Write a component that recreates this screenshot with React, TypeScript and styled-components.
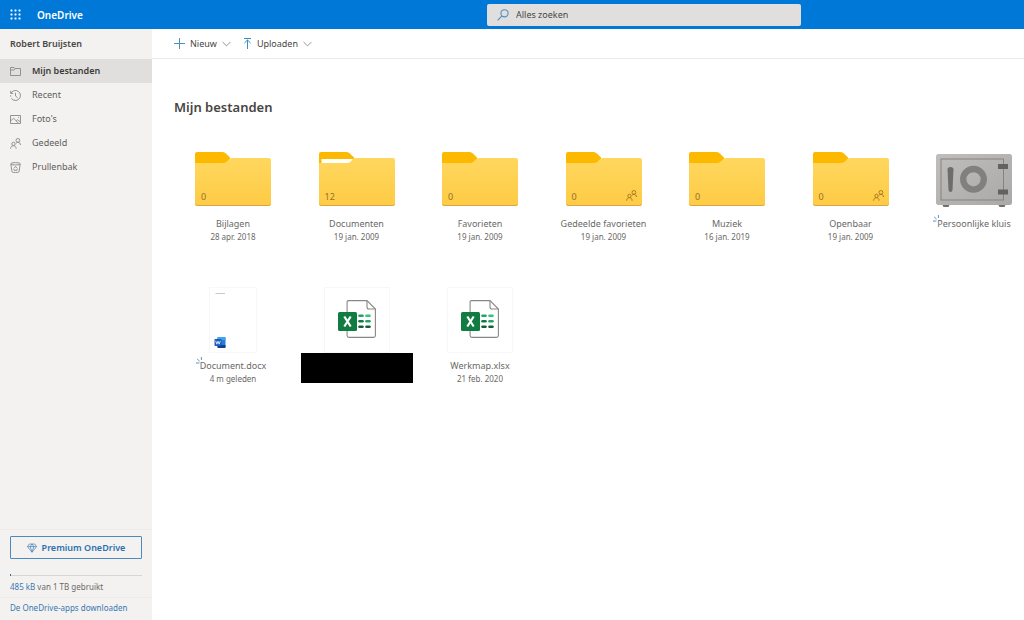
import React from 'react';
import styled, { createGlobalStyle } from 'styled-components';

const GlobalStyle = createGlobalStyle`
  * { box-sizing: border-box; }
  body { margin: 0; background: #fff; }
  body, button, input { font-family: 'Noto Sans', 'Open Sans', sans-serif; }
  button { padding: 0; border: 0; background: none; cursor: pointer; }
  a { color: inherit; text-decoration: none; }
  svg { display: block; flex: none; }
`;

const Page = styled.div`
  min-height: 100vh;
  display: flex;
  flex-direction: column;
  color: #6a6866;
  font-size: 9px;
  line-height: 12px;
`;

const TopBar = styled.header`
  height: 29px;
  flex: none;
  display: grid;
  grid-template-columns: 487fr 314fr 223fr;
  align-items: center;
  background: #0078d7;
`;

const Brand = styled.div`
  display: flex;
  align-items: center;
  gap: 16px;
  padding-left: 10px;
`;

const BrandName = styled.a`
  && { color: #fff; }
  font-size: 10px;
  line-height: 14px;
  font-weight: 600;
`;

const SearchBox = styled.label`
  height: 22px;
  display: flex;
  align-items: center;
  gap: 7px;
  padding: 0 10px;
  border-radius: 2px;
  background: #e1dfdd;
`;

const SearchInput = styled.input`
  flex: 1;
  min-width: 0;
  padding: 0;
  border: 0;
  outline: 0;
  background: transparent;
  color: #484644;
  font-size: 9px;
  &::placeholder { color: #484644; opacity: 1; }
`;

const Body = styled.div`
  flex: 1;
  display: flex;
`;

const Sidebar = styled.aside`
  width: 152px;
  flex: none;
  display: flex;
  flex-direction: column;
  background: #f3f2f1;
`;

const Owner = styled.div`
  height: 30px;
  padding: 0 10px;
  line-height: 30px;
  font-weight: 600;
  color: #484644;
`;

const NavLink = styled.a<{ $active?: boolean }>`
  && { color: ${p => (p.$active ? '#3b3a39' : '#605e5c')}; }
  height: 24px;
  display: flex;
  align-items: center;
  gap: 11px;
  padding-left: 10px;
  font-weight: ${p => (p.$active ? 600 : 400)};
  background: ${p => (p.$active ? '#e1dfdd' : 'transparent')};
`;

const SidebarFooter = styled.div`
  margin-top: auto;
  border-top: 1px solid #edebe9;
`;

const Quota = styled.div`
  padding: 6px 10px 4px;
  font-size: 8px;
`;

const PremiumButton = styled.button`
  width: 100%;
  height: 23px;
  display: flex;
  align-items: center;
  justify-content: center;
  gap: 5px;
  border: 1px solid #4a8abf;
  border-radius: 1px;
  color: #2b70ae;
  font-size: 9px;
  font-weight: 600;
`;

const Meter = styled.div`
  height: 2px;
  margin: 15px 0 5px;
  border-bottom: 1px solid #d8d6d4;
`;

const MeterFill = styled.div`
  height: 2px;
  background: #2b70ae;
`;

const QuotaLink = styled.a`
  && { color: #3878b0; }
`;

const AppsLink = styled.a`
  && { color: #3878b0; }
  display: block;
  height: 23px;
  padding-left: 10px;
  border-top: 1px solid #edebe9;
  font-size: 8px;
  line-height: 20px;
`;

const Main = styled.main`
  flex: 1;
  min-width: 0;
`;

const CommandBar = styled.div`
  height: 30px;
  display: flex;
  align-items: center;
  gap: 12px;
  padding-left: 22px;
  border-bottom: 1px solid #edebe9;
`;

const Command = styled.button`
  display: flex;
  align-items: center;
  gap: 5px;
  color: #484644;
  font-size: 9px;
  line-height: 12px;
`;

const Title = styled.h1`
  margin: 0;
  padding: 38px 22px 0;
  font-size: 13px;
  line-height: 20px;
  font-weight: 600;
  color: #484644;
`;

const Grid = styled.ul`
  margin: 0;
  padding: 28px 0 0 31px;
  list-style: none;
  display: grid;
  grid-template-columns: repeat(7, 100px);
  grid-auto-rows: 114px;
  row-gap: 28px;
  justify-content: space-between;
`;

const Tile = styled.li`
  display: flex;
  flex-direction: column;
  align-items: center;
  white-space: nowrap;
`;

const Thumb = styled.div`
  position: relative;
  width: 76px;
  height: 66px;
  display: flex;
  justify-content: center;
  align-items: center;
  margin-bottom: 6px;
`;

const ContainerThumb = styled(Thumb)`
  padding-top: 2px;
`;

const Count = styled.span`
  position: absolute;
  left: 6px;
  bottom: 8px;
  line-height: 12px;
  color: #94702a;
`;

const ShareBadge = styled.span`
  position: absolute;
  right: 5px;
  bottom: 10px;
`;

const FileName = styled.a`
  position: relative;
  font-size: 9px;
  line-height: 14px;
`;

const FileDate = styled.span`
  font-size: 8px;
  line-height: 12px;
`;

const NewMark = styled.span`
  position: absolute;
  left: -4px;
  top: -2px;
`;

const Sheet = styled.div<{ $w: number }>`
  width: ${p => p.$w}px;
  height: 66px;
  flex: none;
  display: flex;
  align-items: center;
  justify-content: center;
  border: 1px solid #f7f7f7;
`;

const Redaction = styled.div`
  width: 112px;
  height: 30px;
  margin-top: -6px;
  background: #000;
`;

const line = { fill: 'none', stroke: '#8a8886', strokeWidth: 0.9 };

const PeopleIcon = ({ size = 11, color = '#8a8886' }) => (
  <svg width={size} height={size} viewBox="0 0 11 11" fill="none" stroke={color} strokeWidth="0.9">
    <circle cx="7.9" cy="2.4" r="1.9" />
    <path d="M6.1 5.3C6.6 4.6 7.2 4.3 7.9 4.3C9.5 4.3 10.5 5.5 10.5 7" />
    <circle cx="3.5" cy="5.9" r="1.7" />
    <path d="M.6 10.7C.6 8.8 1.8 7.7 3.4 7.7S6.1 8.9 6.1 10.7" />
  </svg>
);

const navIcons: Record<string, React.ReactNode> = {
  files: (
    <svg width="11" height="11" viewBox="0 0 11 11" {...line}>
      <path d="M.5 1.5H4L5 2.5H10.5V9.5H.5ZM.5 4H4L5.2 2.6" />
    </svg>
  ),
  recent: (
    <svg width="11" height="11" viewBox="0 0 11 11" {...line}>
      <path d="M.7 .8V3.4H3.3M1 3.2A5 5 0 1 1 1.4 8.4M5.5 2.8V6L7.6 7.8" />
      <path d="M.7 5.3V6.6" />
    </svg>
  ),
  photos: (
    <svg width="11" height="11" viewBox="0 0 11 11" {...line}>
      <path d="M.5 1.5H10.5V9.5H.5ZM.6 7L3.6 4.2L8.5 9.3M6.2 6.9L7.7 5.7L10.4 8" />
      <path d="M8.2 3.4H9.1" />
    </svg>
  ),
  shared: <PeopleIcon />,
  trash: (
    <svg width="11" height="11" viewBox="0 0 11 11" {...line}>
      <ellipse cx="5.5" cy="1.8" rx="4.8" ry="1.2" />
      <path d="M.8 2.1L2 9.8C2.8 10.8 8.2 10.8 9 9.8L10.2 2.1" />
      <path d="M4.2 6L5.5 4.5L6.9 6M3.7 6.6L4.3 8.3H6.9L7.4 6.6" />
    </svg>
  ),
};

const Waffle = () => (
  <svg width="11" height="11" viewBox="0 0 11 11" fill="#fff">
    {[0, 1, 2].map(r => [0, 1, 2].map(c => (
      <rect key={`${r}${c}`} x={c * 4 + 0.5} y={r * 4 + 0.5} width="2" height="2" rx=".4" />
    )))}
  </svg>
);

const SearchIcon = () => (
  <svg width="12" height="12" viewBox="0 0 12 12" fill="none" stroke="#4f8fbd" strokeWidth="1.1">
    <circle cx="7.5" cy="4.3" r="3.6" />
    <path d="M5 6.9L.6 11.3" />
  </svg>
);

const Chevron = () => (
  <svg width="9" height="6" viewBox="0 0 9 6" fill="none" stroke="#8a8886" strokeWidth=".9">
    <path d="M.6 1L4.5 4.9L8.4 1" />
  </svg>
);

const PlusIcon = () => (
  <svg width="11" height="11" viewBox="0 0 11 11" stroke="#4a93c0" strokeWidth="1">
    <path d="M5.5 0V11M0 5.5H11" />
  </svg>
);

const UploadIcon = () => (
  <svg width="9" height="11" viewBox="0 0 9 11" fill="none" stroke="#3f8dc0" strokeWidth="1">
    <path d="M1 .5H8M4.5 2V11M1.4 5L4.5 2L7.6 5" />
  </svg>
);

const Diamond = () => (
  <svg width="10" height="10" viewBox="0 0 10 10" fill="none" stroke="#3f7fb8" strokeWidth=".7">
    <path d="M2.3 1H7.7L9.6 3.6L5 9.2L.4 3.6ZM.4 3.6H9.6M3.2 3.6L5 9.2L6.8 3.6M3.2 3.6L5 1L6.8 3.6" />
  </svg>
);

const Folder = ({ filled }: { filled?: boolean }) => (
  <svg width="76" height="54" viewBox="0 0 76 54">
    <defs>
      <linearGradient id="folderFront" x1="0" y1="0" x2="0" y2="1">
        <stop offset="0" stopColor="#ffd75e" />
        <stop offset="1" stopColor="#fecb45" />
      </linearGradient>
    </defs>
    <path d="M0 2Q0 0 2 0H27Q29 0 30.5 1.2L35 5.5V14H0Z" fill="#fdb900" />
    {filled && <path d="M2.5 7H34L30 13H2.5Z" fill="#fff" />}
    <path
      d="M0 11H28Q30 11 31.5 9.8L34.5 6.8Q35.5 6 37 6H74Q76 6 76 8V52Q76 54 74 54H2Q0 54 0 52Z"
      fill="url(#folderFront)"
    />
    <path d="M.5 52.3Q1 53.5 2.3 53.5H73.7Q75 53.5 75.5 52.3" fill="none" stroke="#d9a441" strokeWidth="1" />
  </svg>
);

const Vault = () => (
  <svg width="76" height="58" viewBox="0 -4 76 58">
    <defs>
      <linearGradient id="vaultBody" x1="0" y1="0" x2="1" y2="1">
        <stop offset="0" stopColor="#c0bebc" />
        <stop offset="1" stopColor="#aba9a7" />
      </linearGradient>
    </defs>
    <path d="M6 50H14L12.5 53H7.5ZM62 50H70L68.5 53H63.5Z" fill="#72706e" />
    <rect y="0" width="76" height="51" rx="2.5" fill="url(#vaultBody)" />
    <rect x="5" y="5" width="62.5" height="41" fill="none" stroke="#858381" strokeWidth="1" />
    <path d="M11.5 15.5Q11.5 13 14.5 13T17.5 15.5L16.5 36Q16.2 38 14.5 38T12.5 36Z" fill="#6f6d6b" />
    <circle cx="37.5" cy="25.3" r="10.3" fill="none" stroke="#827f7d" strokeWidth="6.3" />
    <path d="M62 10H72V15H62ZM62 35.5H72V40.5H62Z" fill="#646260" />
  </svg>
);

const Spark = () => (
  <svg width="7" height="7" viewBox="0 0 7 7" fill="none" stroke="#4a88bf" strokeWidth=".9">
    <path d="M0 6H3.4M1.2 2L3.6 4.2M5.4 0V3" />
  </svg>
);

const WordSheet = () => (
  <svg width="46" height="64" viewBox="0 0 46 64">
    <path d="M5.5 5.5H15" stroke="#c9c9c9" strokeWidth="1" />
    <rect x="7.5" y="49" width="8" height="11" rx="1" fill="#2b7cd3" />
    <path d="M7.5 49H14.5Q15.5 49 15.5 50V52H7.5Z" fill="#41a5ee" />
    <path d="M7.5 57H15.5V59Q15.5 60 14.5 60H8.5Q7.5 60 7.5 59Z" fill="#103f91" />
    <rect x="4.5" y="51" width="7" height="7" rx=".8" fill="#185abd" />
    <path d="M5.7 52.8L6.8 56.2L8 53.2L9.2 56.2L10.3 52.8" fill="none" stroke="#fff" strokeWidth=".8" />
  </svg>
);

const ExcelFile = () => (
  <svg width="38" height="40" viewBox="0 0 38 40">
    <path d="M10 .6H29L37.4 9V35.5Q37.4 37.4 35.5 37.4H11Q9.1 37.4 9.1 35.5V2Q9.1 .6 10.5 .6Z" fill="#fff" stroke="#8a8886" strokeWidth="1.1" />
    <path d="M29 .8V7Q29 9 31 9H37.3" fill="none" stroke="#8a8886" strokeWidth="1.1" />
    <rect y="12" width="19" height="19" rx="1.5" fill="#107c41" />
    <path d="M6.3 16.5L12.7 26.5M12.7 16.5L6.3 26.5" stroke="#fff" strokeWidth="2.2" />
    <g strokeWidth="2.6" strokeLinecap="round">
      <path d="M21.5 15.8H24.5" stroke="#21a366" />
      <path d="M28.5 15.8H31.5" stroke="#33c481" />
      <path d="M21.5 21.3H24.5" stroke="#107c41" />
      <path d="M28.5 21.3H31.5" stroke="#21a366" />
      <path d="M21.5 26.8H24.5M28.5 26.8H31.5" stroke="#185c37" />
    </g>
  </svg>
);

const nav = [
  { id: 'files', label: 'Mijn bestanden' },
  { id: 'recent', label: 'Recent' },
  { id: 'photos', label: "Foto's" },
  { id: 'shared', label: 'Gedeeld' },
  { id: 'trash', label: 'Prullenbak' },
];

const folders = [
  { name: 'Bijlagen', date: '28 apr. 2018', count: 0 },
  { name: 'Documenten', date: '19 jan. 2009', count: 12 },
  { name: 'Favorieten', date: '19 jan. 2009', count: 0 },
  { name: 'Gedeelde favorieten', date: '19 jan. 2009', count: 0, shared: true },
  { name: 'Muziek', date: '16 jan. 2019', count: 0 },
  { name: 'Openbaar', date: '19 jan. 2009', count: 0, shared: true },
];

export default function App() {
  const usedPercent = 1;
  return (
    <Page>
      <GlobalStyle />
      <TopBar>
        <Brand>
          <button aria-label="Startprogramma voor apps"><Waffle /></button>
          <BrandName href="#">OneDrive</BrandName>
        </Brand>
        <SearchBox>
          <SearchIcon />
          <SearchInput type="search" placeholder="Alles zoeken" aria-label="Alles zoeken" />
        </SearchBox>
      </TopBar>
      <Body>
        <Sidebar>
          <Owner>Robert Bruijsten</Owner>
          <nav>
            {nav.map((item, i) => (
              <NavLink key={item.id} href="#" $active={i === 0}>
                {navIcons[item.id]}
                {item.label}
              </NavLink>
            ))}
          </nav>
          <SidebarFooter>
            <Quota>
              <PremiumButton><Diamond />Premium OneDrive</PremiumButton>
              <Meter><MeterFill style={{ width: `${usedPercent}%` }} /></Meter>
              <QuotaLink href="#">485 kB</QuotaLink> van 1 TB gebruikt
            </Quota>
            <AppsLink href="#">De OneDrive-apps downloaden</AppsLink>
          </SidebarFooter>
        </Sidebar>
        <Main>
          <CommandBar>
            <Command><PlusIcon />Nieuw<Chevron /></Command>
            <Command><UploadIcon />Uploaden<Chevron /></Command>
          </CommandBar>
          <Title>Mijn bestanden</Title>
          <Grid>
            {folders.map(f => (
              <Tile key={f.name}>
                <ContainerThumb>
                  <Folder filled={f.count > 0} />
                  <Count>{f.count}</Count>
                  {f.shared && <ShareBadge><PeopleIcon color="#a07420" /></ShareBadge>}
                </ContainerThumb>
                <FileName href="#">{f.name}</FileName>
                <FileDate>{f.date}</FileDate>
              </Tile>
            ))}
            <Tile>
              <ContainerThumb><Vault /></ContainerThumb>
              <FileName href="#"><NewMark><Spark /></NewMark>Persoonlijke kluis</FileName>
            </Tile>
            <Tile>
              <Thumb><Sheet $w={48}><WordSheet /></Sheet></Thumb>
              <FileName href="#"><NewMark><Spark /></NewMark>Document.docx</FileName>
              <FileDate>4 m geleden</FileDate>
            </Tile>
            <Tile>
              <Thumb><Sheet $w={66}><ExcelFile /></Sheet></Thumb>
              <Redaction />
            </Tile>
            <Tile>
              <Thumb><Sheet $w={66}><ExcelFile /></Sheet></Thumb>
              <FileName href="#">Werkmap.xlsx</FileName>
              <FileDate>21 feb. 2020</FileDate>
            </Tile>
          </Grid>
        </Main>
      </Body>
    </Page>
  );
}
